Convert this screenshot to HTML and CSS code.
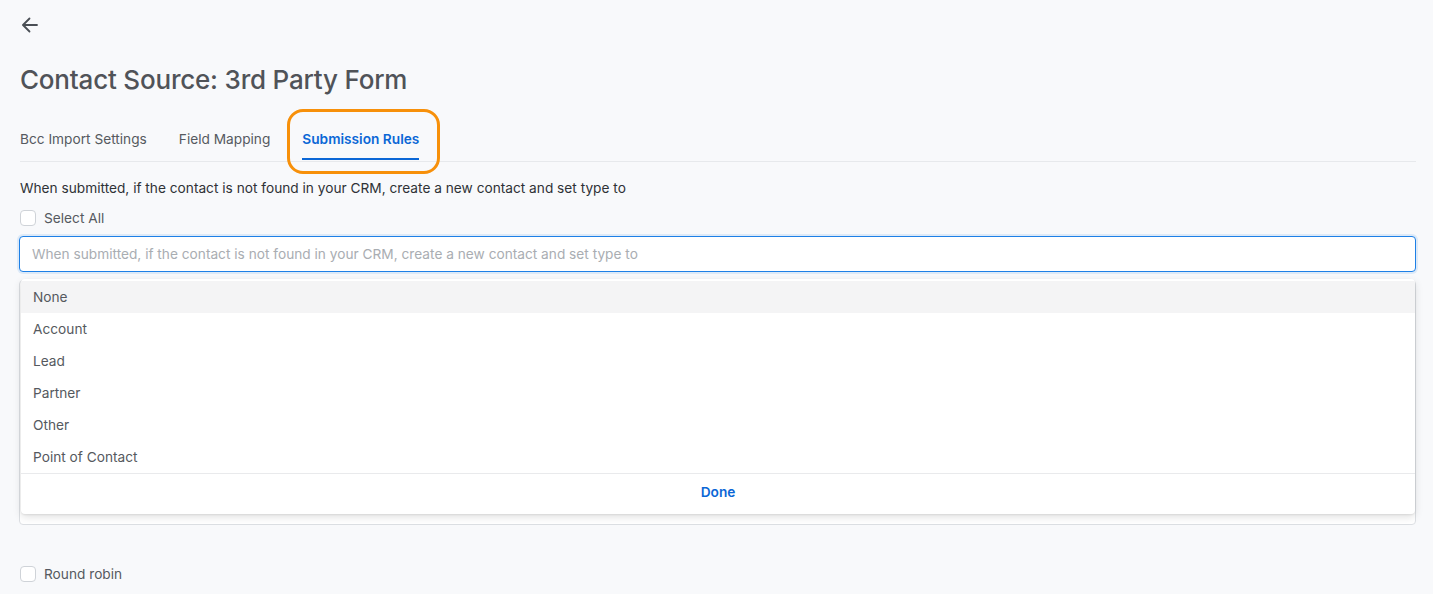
FILE: index.html
```html
<!DOCTYPE html>
<html lang="en">
<head>
<meta charset="UTF-8">
<meta name="viewport" content="width=device-width, initial-scale=1.0">
<title>Contact Source: 3rd Party Form</title>
<link rel="stylesheet" href="styles.css">
</head>
<body>

<div class="page">
    <div class="top-bar">
        <button class="back-btn" type="button" aria-label="Back">
            <svg width="18" height="18" viewBox="0 0 18 18" fill="none" stroke="#4a4f55" stroke-width="1.8" stroke-linecap="round" stroke-linejoin="round">
                <path d="M16 9H2.5"/>
                <path d="M8.5 2.5L2 9l6.5 6.5"/>
            </svg>
        </button>
    </div>

    <h1 class="title">Contact Source: 3rd Party Form</h1>

    <div class="tabs">
        <div class="tab">Bcc Import Settings</div>
        <div class="tab">Field Mapping</div>
        <div class="tab active">
            Submission Rules
            <span class="highlight"></span>
        </div>
    </div>

    <p class="rule-text">When submitted, if the contact is not found in your CRM, create a new contact and set type to</p>

    <label class="check-row">
        <span class="checkbox"></span>
        <span>Select All</span>
    </label>

    <input class="type-input" type="text" placeholder="When submitted, if the contact is not found in your CRM, create a new contact and set type to">

    <div class="field-wrap">
        <div class="under-box"></div>
        <div class="dropdown">
            <ul class="options">
                <li class="hover">None</li>
                <li>Account</li>
                <li>Lead</li>
                <li>Partner</li>
                <li>Other</li>
                <li>Point of Contact</li>
            </ul>
            <div class="dropdown-footer">Done</div>
        </div>
    </div>

    <label class="check-row round-robin">
        <span class="checkbox"></span>
        <span>Round robin</span>
    </label>
</div>

</body>
</html>
```

FILE: styles.css
```css
body {
    font-family: Inter, "Noto Sans", "Liberation Sans", sans-serif;
    background-color: #f8f9fb;
    margin: 0;
    padding: 0;
    color: #333;
}

.page {
    padding: 0 17px 0 20px;
}

.top-bar {
    height: 50px;
    display: flex;
    align-items: flex-start;
    padding-top: 16px;
    box-sizing: border-box;
}

.back-btn {
    background: none;
    border: none;
    padding: 0;
    margin-left: 1px;
    width: 18px;
    height: 18px;
    cursor: pointer;
    display: flex;
}

.title {
    margin: 14px 0 0;
    font-size: 26px;
    line-height: 32px;
    font-weight: 500;
    color: #505358;
    letter-spacing: -0.2px;
}

.tabs {
    display: flex;
    gap: 32px;
    margin-top: 24px;
    border-bottom: 1px solid #e7e9ec;
}

.tab {
    position: relative;
    font-size: 13.7px;
    line-height: 20px;
    padding: 9px 0 9px;
    color: #555a60;
    border-bottom: 2px solid transparent;
}

.tab.active {
    color: #0b67d6;
    font-weight: 600;
    border-bottom-color: #0b67d6;
    margin-bottom: 1px;
}

.highlight {
    position: absolute;
    left: -15px;
    top: -11px;
    width: 153px;
    height: 65px;
    border: 3px solid #f7900a;
    border-radius: 16px;
    box-sizing: border-box;
}

.rule-text {
    margin: 16px 0 0;
    font-size: 13.7px;
    line-height: 20px;
    color: #2f3236;
}

.check-row {
    display: flex;
    align-items: center;
    gap: 8px;
    margin-top: 10px;
    font-size: 13.7px;
    line-height: 20px;
    color: #555a60;
}

.checkbox {
    width: 14px;
    height: 14px;
    border: 1px solid #cfd3d8;
    border-radius: 4px;
    background-color: #fff;
}

.type-input {
    display: block;
    box-sizing: border-box;
    width: calc(100% + 1px);
    margin: 8px 0 0 -1px;
    height: 36px;
    padding: 0 12px;
    font-family: inherit;
    font-size: 13.7px;
    color: #333;
    background-color: #fff;
    border: 1px solid #1e80e6;
    border-radius: 4px;
    box-shadow: 0 0 0 2px rgba(30, 128, 230, 0.12);
    outline: none;
}

.type-input::placeholder {
    color: #a9adb2;
}

.field-wrap {
    position: relative;
    margin-top: 8px;
}

.under-box {
    height: 245px;
    margin-left: -1px;
    background-color: #fff;
    border: 1px solid #dcdfe3;
    border-radius: 4px;
    box-sizing: border-box;
}

.dropdown {
    position: absolute;
    top: -1px;
    left: 1px;
    right: 1px;
    background-color: #fff;
    border-radius: 4px;
    box-shadow: 0 1px 2px rgba(0, 0, 0, 0.08), 0 3px 8px rgba(0, 0, 0, 0.12);
    padding-top: 2px;
}

.options {
    list-style-type: none;
    margin: 0;
    padding: 0;
}

.options li {
    height: 32px;
    line-height: 32px;
    padding-left: 12px;
    font-size: 13.7px;
    color: #55595e;
}

.options li.hover {
    background-color: #f4f4f5;
}

.dropdown-footer {
    border-top: 1px solid #e9eaec;
    height: 40px;
    line-height: 36px;
    text-align: center;
    font-size: 13.7px;
    font-weight: 600;
    color: #0b67d6;
}

.round-robin {
    margin-top: 39px;
}
```
